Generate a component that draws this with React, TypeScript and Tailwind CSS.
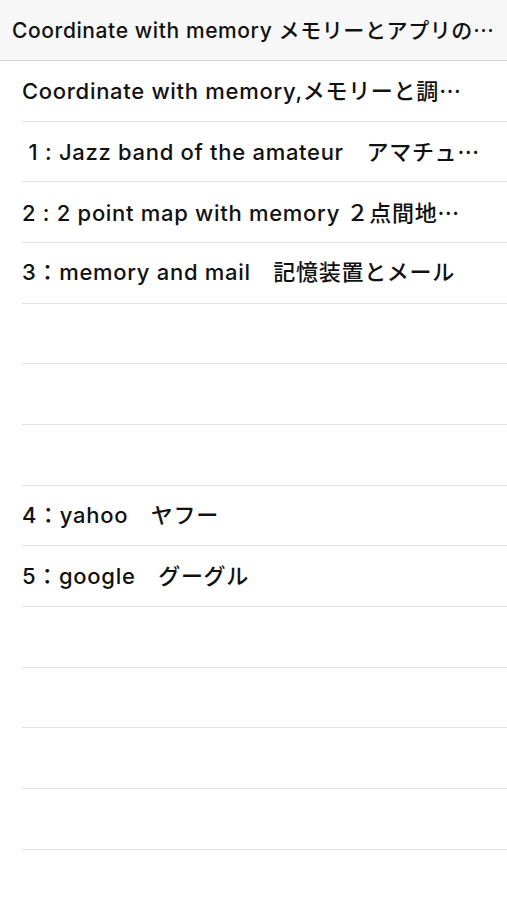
import React from 'react';

type RowData = { text: string; more?: boolean };

const rows: RowData[] = [
  { text: 'Coordinate with memory,メモリーと調', more: true },
  { text: ' 1 : Jazz band of the amateur　アマチュ', more: true },
  { text: '2 : 2 point map with memory ２点間地', more: true },
  { text: '3：memory and mail　記憶装置とメール' },
  { text: '' },
  { text: '' },
  { text: '' },
  { text: '4：yahoo　ヤフー' },
  { text: '5：google　グーグル' },
  { text: '' },
  { text: '' },
  { text: '' },
  { text: '' },
];

// CJK font draws the ellipsis centred on the line, as in the reference
function More() {
  return <span style={{ fontFamily: '"Noto Sans CJK JP", sans-serif' }}>…</span>;
}

function Row({ text, more }: RowData) {
  return (
    <div className="pl-[22px] bg-white">
      <div className="h-[60.67px] flex items-center border-b border-[#e3e3e3] pr-[16px] overflow-hidden">
        <span className="text-[22px] tracking-[0.7px] font-medium text-[#111] whitespace-pre">
          {text}
          {more && <More />}
        </span>
      </div>
    </div>
  );
}

export default function App() {
  return (
    <div
      className="w-[507px] h-[900px] bg-white overflow-hidden"
      style={{ fontFamily: 'Inter, "Noto Sans CJK JP", sans-serif' }}
    >
      <div className="h-[61px] bg-[#f7f7f7] border-b border-[#d4d4d4] flex items-center px-[12px] overflow-hidden">
        <span className="text-[21px] tracking-[0.6px] font-medium text-[#111] whitespace-pre">
          Coordinate with memory メモリーとアプリの
          <More />
        </span>
      </div>
      {rows.map((r, i) => (
        <Row key={i} text={r.text} more={r.more} />
      ))}
    </div>
  );
}
